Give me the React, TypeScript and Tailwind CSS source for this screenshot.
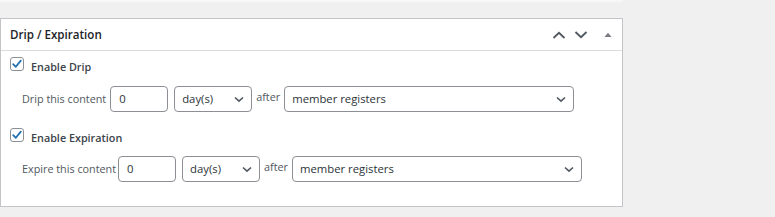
import React from "react";

const font = { fontFamily: '"Open Sans", "Noto Sans", sans-serif' };

function Check() {
  return (
    <span className="mt-[1px] flex h-[14px] w-[14px] shrink-0 items-center justify-center rounded-[3px] border border-[#8c8f94] bg-white">
      <svg width="12" height="12" viewBox="0 0 12 12">
        <path d="M2.2 6.2 L4.8 8.8 L9.8 2.6" fill="none" stroke="#2271b1" strokeWidth="1.8" strokeLinecap="round" strokeLinejoin="round" />
      </svg>
    </span>
  );
}

function Chevron() {
  return (
    <svg width="10" height="7" viewBox="0 0 10 7" className="shrink-0">
      <path d="M1 1.5 L5 5.2 L9 1.5" fill="none" stroke="#50575e" strokeWidth="1.6" />
    </svg>
  );
}

function Select({ w, text }: { w: string; text: string }) {
  return (
    <div className={`flex h-[26px] ${w} items-center justify-between rounded-[4px] border border-[#8c8f94] bg-white pl-[7px] pr-[7px] text-[11.3px] text-[#2c3338]`}>
      <span>{text}</span>
      <Chevron />
    </div>
  );
}

function Row({ label, gap }: { label: string; gap: string }) {
  return (
    <div className="flex items-center text-[10.8px] text-[#50575e]">
      <span className={gap}>{label}</span>
      <div className="flex h-[26px] w-[58px] items-center rounded-[4px] border border-[#8c8f94] bg-white pl-[8px] text-[11.3px] text-[#2c3338]">0</div>
      <div className="ml-[6px]"><Select w="w-[78px]" text="day(s)" /></div>
      <span className="mx-[4px] -mt-[3px] text-[10.8px]">after</span>
      <Select w="w-[290px]" text="member registers" />
    </div>
  );
}

export default function App() {
  return (
    <div className="h-[217px] w-[775px] overflow-hidden bg-[#f0f0f1]" style={font}>
      <div className="h-[2px] w-[623px] bg-[#f6f7f7]" />
      <div className="mt-[16px] w-[623px] border border-[#c3c4c7] bg-white">
        <div className="flex h-[32px] items-center justify-between border-b border-[#dcdcde] pl-[9px] pr-[10px]">
          <span className="text-[11.6px] font-semibold text-[#1d2327]">Drip / Expiration</span>
          <div className="flex items-center">
            <svg width="14" height="8" viewBox="0 0 14 8">
              <path d="M1.5 7 L7 1.8 L12.5 7" fill="none" stroke="#50575e" strokeWidth="1.8" />
            </svg>
            <svg width="14" height="8" viewBox="0 0 14 8" className="ml-[8px]">
              <path d="M1.5 1 L7 6.2 L12.5 1" fill="none" stroke="#50575e" strokeWidth="1.8" />
            </svg>
            <svg width="8" height="6" viewBox="0 0 8 6" className="ml-[16px]">
              <path d="M0.5 5 L4 0.8 L7.5 5 Z" fill="#787c82" />
            </svg>
          </div>
        </div>
        <div className="pb-[24px] pl-[9px]">
          <div className="mt-[5px] flex items-start gap-[7px]">
            <Check />
            <span className="text-[10.8px] font-semibold leading-[22px] text-[#3c434a]">Enable Drip</span>
          </div>
          <div className="mt-[8px] pl-[12px]">
            <Row label="Drip this content" gap="mr-[4px]" />
          </div>
          <div className="mt-[15px] flex items-start gap-[7px]">
            <Check />
            <span className="text-[10.8px] font-semibold leading-[22px] text-[#3c434a]">Enable Expiration</span>
          </div>
          <div className="mt-[7px] pl-[12px]">
            <Row label="Expire this content" gap="mr-[2px]" />
          </div>
        </div>
      </div>
    </div>
  );
}
